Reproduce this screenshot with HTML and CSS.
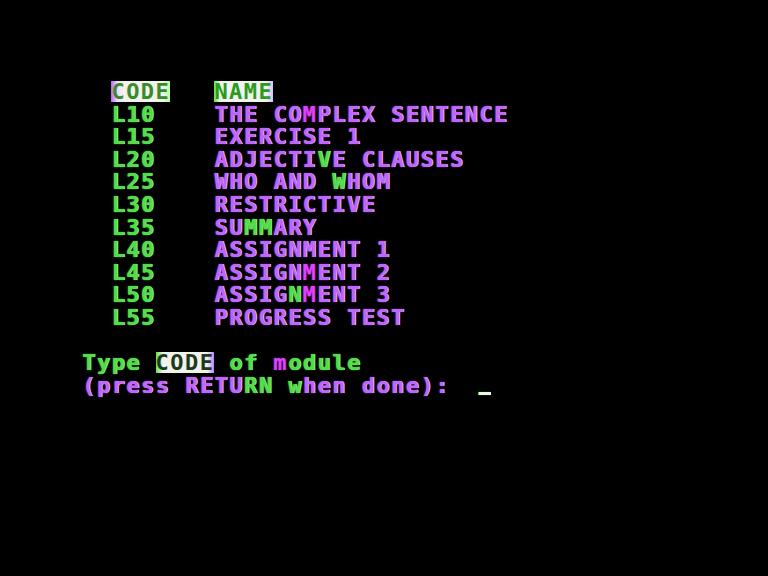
FILE: index.html
```html
<!DOCTYPE html>
<html>
<head>
<meta charset="utf-8">
<link rel="stylesheet" href="styles.css">
</head>
<body>
<div class="screen">
  <div class="line"><span class="g">  </span><span class="inv inv-p">CODE</span><span>   </span><span class="inv inv-g">NAME</span></div>
  <div class="line"><span class="g">  L10    </span><span class="p">THE CO</span><span class="m">M</span><span class="p">PLEX SENTENCE</span></div>
  <div class="line"><span class="g">  L15    </span><span class="p">EXERCISE 1</span></div>
  <div class="line"><span class="g">  L20    </span><span class="p">ADJECTI</span><span class="g">V</span><span class="p">E CLAUSES</span></div>
  <div class="line"><span class="g">  L25    </span><span class="p">WHO AND </span><span class="g">W</span><span class="p">HOM</span></div>
  <div class="line"><span class="g">  L30    </span><span class="p">RESTRICTIVE</span></div>
  <div class="line"><span class="g">  L35    </span><span class="p">SU</span><span class="g">MM</span><span class="p">ARY</span></div>
  <div class="line"><span class="g">  L40    </span><span class="p">ASSIGNMENT 1</span></div>
  <div class="line"><span class="g">  L45    </span><span class="p">ASSIGN</span><span class="m">M</span><span class="p">ENT 2</span></div>
  <div class="line"><span class="g">  L50    </span><span class="p">ASSIG</span><span class="g">N</span><span class="m">M</span><span class="p">ENT 3</span></div>
  <div class="line"><span class="g">  L55    </span><span class="p">PROGRESS TEST</span></div>
  <div class="line"> </div>
  <div class="line"><span class="g">Type </span><span class="inv inv-g2">CODE</span><span class="g"> of </span><span class="m">m</span><span class="g">odule</span></div>
  <div class="line"><span class="p">(press RETU</span><span class="g">RN</span><span class="p"> </span><span class="g">w</span><span class="p">hen done):  </span><span class="cursor"></span></div>
</div>
</body>
</html>
```
FILE: styles.css
```css
html, body {
  margin: 0;
  padding: 0;
  background: #000;
}
body {
  width: 768px;
  height: 576px;
  overflow: hidden;
}
.screen {
  display: grid;
  grid-auto-rows: 22.6px;
  padding: 81px 0 0 82px;
  font-family: "DejaVu Sans Mono", "Liberation Mono", monospace;
  font-weight: bold;
  font-size: 22px;
  letter-spacing: 1.46px;
}
.line {
  white-space: pre;
  line-height: 22.6px;
  height: 22.6px;
}
.g {
  color: #52dc4a;
  text-shadow: 0 0 2px rgba(82, 220, 74, 0.6), 1px 0 0 #9aff8a;
}
.p {
  color: #c064ff;
  text-shadow: 0 0 2px rgba(192, 100, 255, 0.6), 1px 0 0 #e2c8ff;
}
.m {
  color: #e040ff;
  text-shadow: 0 0 2px rgba(224, 64, 255, 0.6);
}
.inv {
  display: inline-block;
  color: #1a1a1a;
  height: 21px;
  line-height: 22.6px;
}
.inv-p {
  background: linear-gradient(to right, #c060ff 0, #e8d8ff 10%, #f2f2ee 20%, #f2f2ee 88%, #b8ff9a 100%);
  color: #3a8a2a;
}
.inv-g {
  background: linear-gradient(to right, #60e050 0, #e8f8e0 10%, #f2f2ee 20%, #f2f2ee 88%, #d8c0ff 100%);
  color: #2a9a20;
}
.inv-g2 {
  background: linear-gradient(to right, #60e050 0, #f2f2ee 12%, #f2f2ee 88%, #c080ff 100%);
  color: #1c3a1c;
}
.cursor {
  display: inline-block;
  width: 12px;
  height: 3px;
  background: #e8f8e0;
  box-shadow: -1px 0 1px #60e050;
  vertical-align: -2px;
}
```
